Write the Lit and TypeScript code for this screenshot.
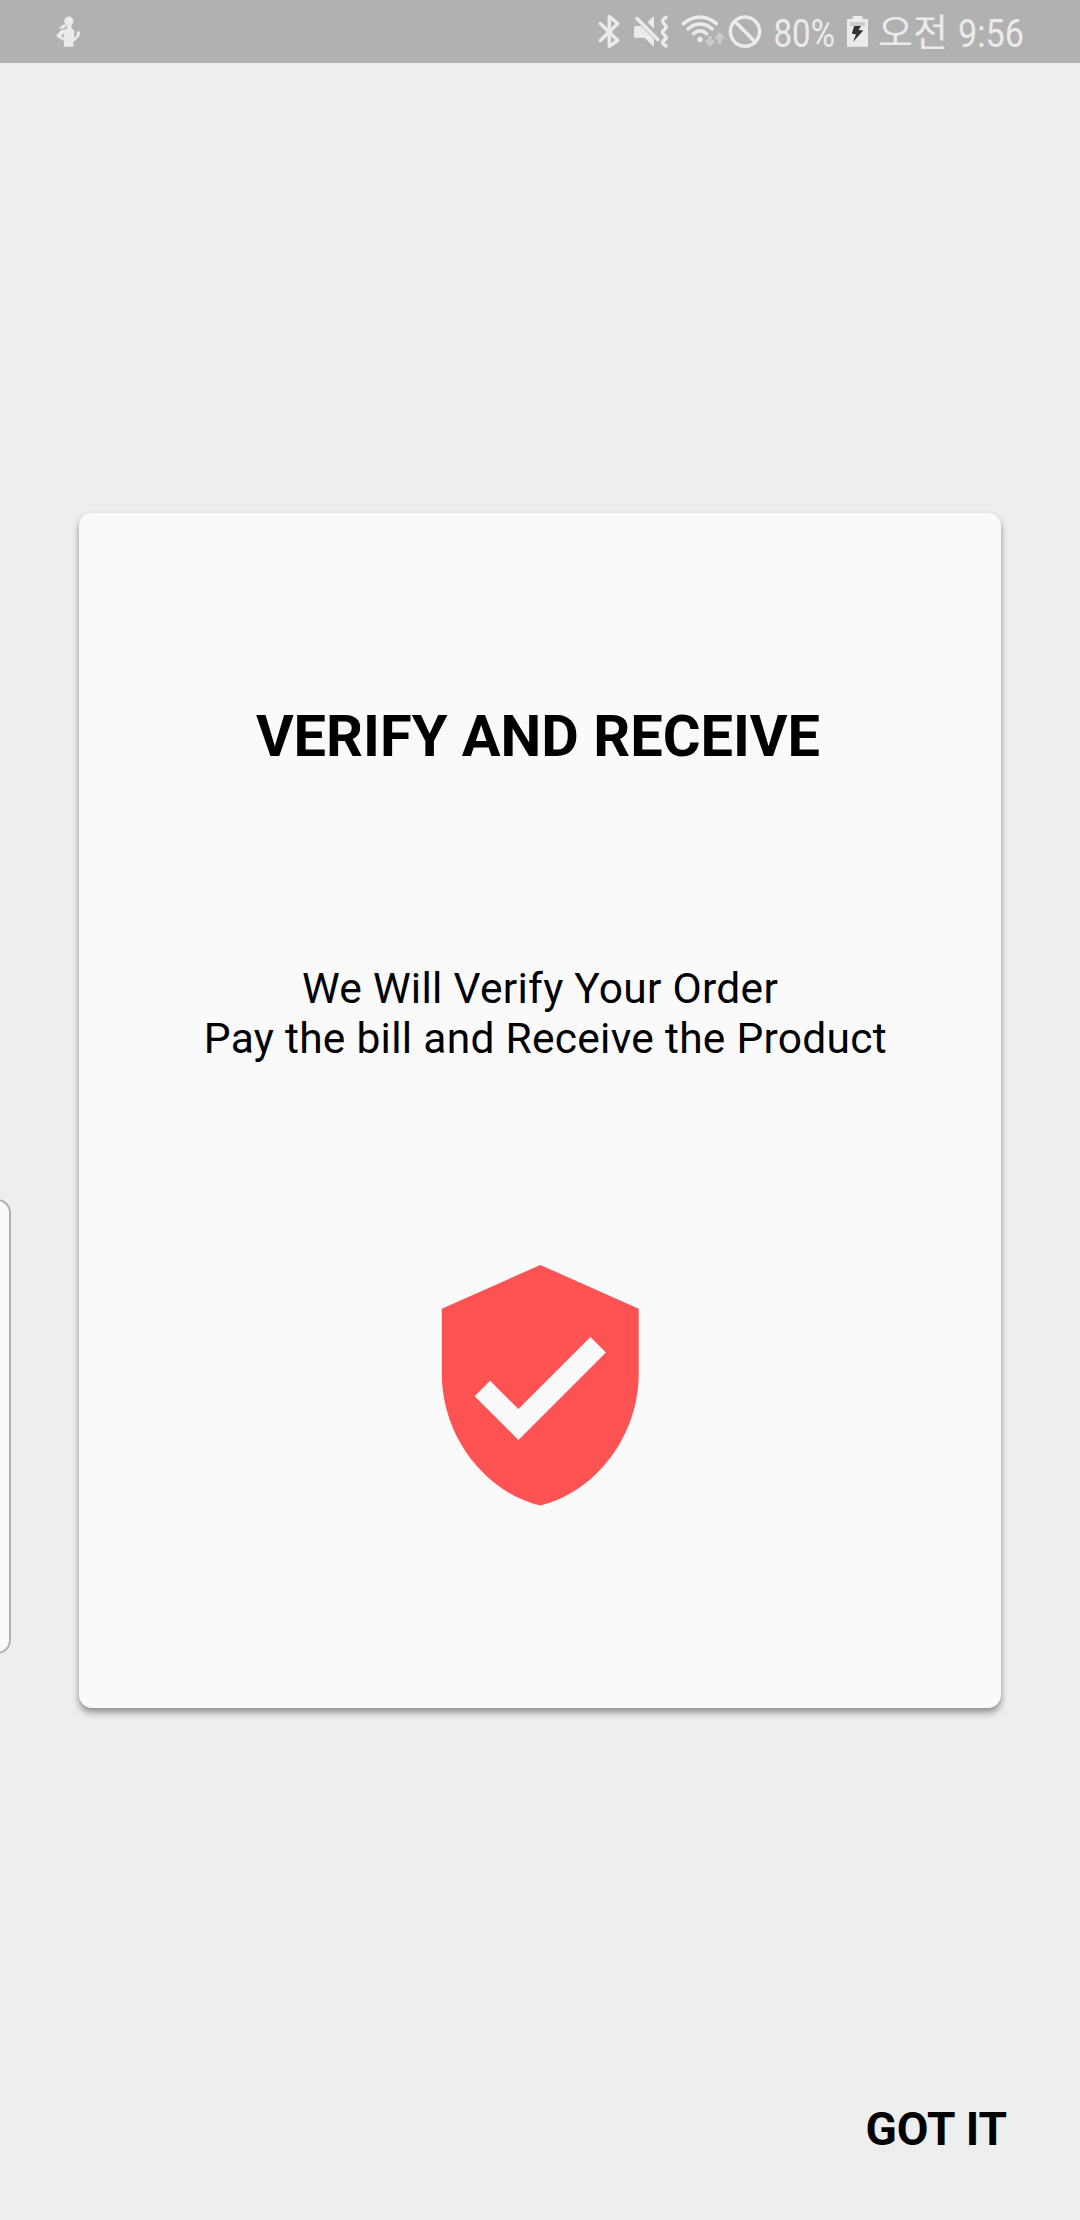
import { LitElement, html, css } from "lit";
import { customElement } from "lit/decorators.js";

@customElement("status-bar")
class StatusBar extends LitElement {
  static styles = css`
    :host {
      display: flex;
      height: 63px;
      background: #b1b1b1;
      justify-content: space-between;
    }
    .group {
      display: flex;
    }
    .left {
      padding-left: 50px;
    }
    .right {
      padding-right: 49px;
    }
    svg {
      display: block;
      height: 63px;
      fill: #ebebeb;
      font-family: Roboto, "Noto Sans CJK KR", sans-serif;
      font-size: 39px;
      overflow: visible;
    }
    .line {
      fill: none;
      stroke: #ebebeb;
      stroke-width: 3.5;
      stroke-linecap: round;
      stroke-linejoin: round;
    }
    .dim {
      fill: #cbcbcb;
    }
    .bolt {
      fill: #333;
    }
    .korean {
      font-family: "Noto Sans CJK KR", sans-serif;
      font-size: 38px;
    }
  `;

  render() {
    return html`
      <div class="group left">
        <svg width="40" viewBox="50 0 40 63">
          <ellipse cx="68.8" cy="21.3" rx="4.6" ry="4.8"></ellipse>
          <path d="M66 24.3L62 25.2L58.7 28.8L62.8 28.8L66.2 26.3Z"></path>
          <path d="M67 25H71.5V28.2L74.3 30.5V38L76.5 35.5L76.8 32.2Q78.4 30.5 80 32.2Q80.7 34.5 79 36.5L75 41H73.4V46.8H64V41L57 36.8Q56 35.5 57 34.5L61.2 30.2L67 28.5ZM63.8 33.2L61 36L63.8 38Z" fill-rule="evenodd"></path>
        </svg>
      </div>
      <div class="group right">
        <svg width="34" viewBox="594 0 34 63">
          <path class="line" d="M600.3 23.6L617.8 40.5L609.3 46.3V16.5L617.8 23.6L600.3 40.5"></path>
        </svg>
        <svg width="50" viewBox="628 0 50 63">
          <path d="M635 26H641L654 39V47L644.5 37.7H635Q634 37.7 634 36.7V27Q634 26 635 26Z"></path>
          <path d="M647.6 22.2L654 16V29Z"></path>
          <path class="line" d="M637 18.5L657.8 39.5"></path>
          <path class="line" d="M666 17.3Q661.5 20.5 663 22.5L665.8 26Q666.8 27.3 665.5 28.5L663 31Q662 32.2 663 33.4L665.8 36.5Q666.8 37.7 665.5 38.9L663 41.3Q661.5 43 666 46"></path>
        </svg>
        <svg width="48" viewBox="678 0 48 63">
          <path class="line" d="M683.4 23.6Q700 10.4 716.5 23.6M688 28.8Q700 19.2 712.2 28.8M693.4 33.7Q700 28 706.6 33.7"></path>
          <circle cx="700" cy="39.4" r="2.6"></circle>
          <path class="dim" d="M708.3 36H711.7V41L713.4 39.3L715 41.8L710 47L705 41.8L706.8 39.3L708.3 41Z"></path>
          <path class="dim" d="M718 44H721.4V38.2L723 39.8L724.6 37.3L719.7 32.3L714.8 37.3L716.3 39.8L718 38.2Z"></path>
        </svg>
        <svg width="42" viewBox="726 0 42 63">
          <circle class="line" cx="745" cy="31.6" r="14.6"></circle>
          <path class="line" d="M734.7 21.3L755.3 41.9"></path>
        </svg>
        <svg width="74" viewBox="768 0 74 63">
          <text x="773.5" y="47" textLength="61.5" lengthAdjust="spacingAndGlyphs">80%</text>
        </svg>
        <svg width="32" viewBox="842 0 32 63">
          <path d="M852.5 16H862.5V19H868V46.7H847V19H852.5Z"></path>
          <path class="dim" d="M850 22H865V26H850Z"></path>
          <path class="bolt" d="M854.2 26H861L858.5 30L863.3 30.5L853 42L856 34.5L851.8 33.5Z"></path>
        </svg>
        <svg width="157" viewBox="874 0 157 63">
          <text class="korean" x="878" y="46" textLength="70" lengthAdjust="spacingAndGlyphs">오전</text>
          <text x="958" y="47" textLength="66" lengthAdjust="spacingAndGlyphs">9:56</text>
        </svg>
      </div>
    `;
  }
}

@customElement("app-root")
class AppRoot extends LitElement {
  static styles = css`
    :host {
      display: flex;
      flex-direction: column;
      position: relative;
      height: 2220px;
      overflow: hidden;
      background: #eee;
      color: #000;
      font-family: Roboto, sans-serif;
    }
    .card {
      display: flex;
      flex-direction: column;
      align-items: center;
      box-sizing: border-box;
      height: 1195px;
      margin: 450px 79px 0 79px;
      padding-top: 189px;
      border-radius: 13px;
      background: #fafafa;
      box-shadow: 0 5px 7px rgba(0, 0, 0, 0.34), 0 2px 5px rgba(0, 0, 0, 0.1);
    }
    .title {
      margin: 0;
      padding-right: 4px;
      font-size: 57.75px;
      line-height: 68px;
      font-weight: 700;
      white-space: nowrap;
    }
    .text {
      margin: 194px 0 0;
      font-size: 42.5px;
      letter-spacing: 0.28px;
      line-height: 50px;
      text-align: center;
      white-space: pre;
    }
    .shield {
      display: block;
      width: 262.5px;
      height: 262.5px;
      margin-top: 190px;
      fill: #ff5252;
    }
    .footer {
      display: flex;
      justify-content: flex-end;
      margin-top: 394px;
      padding-right: 73px;
    }
    .action {
      border: 0;
      padding: 0;
      background: none;
      color: inherit;
      font: 700 46px/54px Roboto, sans-serif;
    }
    .edge {
      position: absolute;
      left: -20px;
      top: 1199px;
      box-sizing: border-box;
      width: 31px;
      height: 455px;
      border: 2px solid #b0b0b0;
      border-radius: 14px;
      background: #fafafa;
    }
  `;

  render() {
    return html`
      <status-bar></status-bar>
      <section class="card">
        <h1 class="title">VERIFY AND RECEIVE</h1>
        <p class="text">${"We Will Verify Your Order\n Pay the bill and Receive the Product"}</p>
        <svg class="shield" viewBox="0 0 24 24">
          <path d="M12 1L3 5v6c0 5.55 3.84 10.74 9 12 5.16-1.26 9-6.45 9-12V5l-9-4zm-2 16l-4-4 1.41-1.41L10 14.17l6.59-6.59L18 9l-8 8z"></path>
        </svg>
      </section>
      <div class="footer"><button class="action">GOT IT</button></div>
      <div class="edge"></div>
    `;
  }
}
